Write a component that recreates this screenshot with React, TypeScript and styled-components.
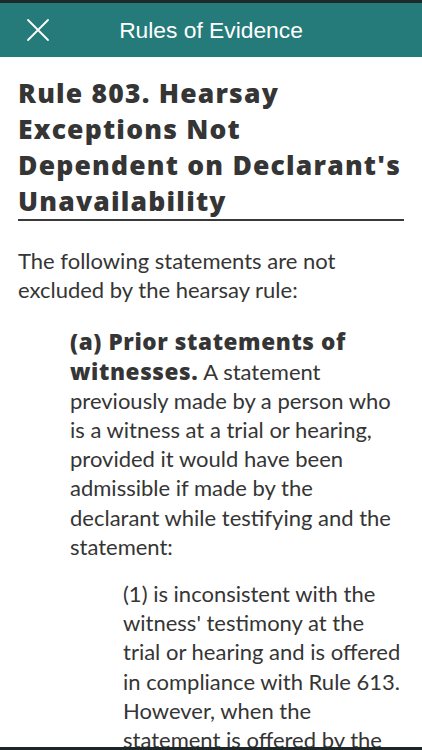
import React from 'react';
import styled, { createGlobalStyle } from 'styled-components';

const TEAL = '#247b7a';
const INK = '#353535';
const BODY_FONT = `'Lato', 'Open Sans', sans-serif`;
const BOLD_FONT = `'Open Sans', 'Lato', sans-serif`;

const GlobalStyle = createGlobalStyle`
  html, body {
    margin: 0;
    padding: 0;
    background: #ffffff;
  }
`;

const Screen = styled.div`
  width: 422px;
  height: 750px;
  display: flex;
  flex-direction: column;
  overflow: hidden;
  background: #ffffff;
  box-sizing: border-box;
  border-bottom: 3px solid #1d2626;
`;

const StatusStrip = styled.div`
  height: 3px;
  background: #1c2a2a;
  flex-shrink: 0;
`;

const Header = styled.header`
  height: 54px;
  flex-shrink: 0;
  background: ${TEAL};
  display: grid;
  grid-template-columns: 1fr auto 1fr;
  align-items: center;
  padding: 0 26px;
`;

const CloseButton = styled.button`
  width: 24px;
  height: 24px;
  padding: 0;
  border: none;
  background: none;
  display: flex;
  cursor: pointer;
  justify-self: start;
`;

const Title = styled.h1`
  margin: 0;
  font-family: 'Liberation Sans', Arial, sans-serif;
  font-weight: 400;
  font-size: 22.8px;
  color: #ffffff;
`;

const Content = styled.main`
  flex: 1;
  padding: 0 18px;
  font-family: ${BODY_FONT};
  color: ${INK};
`;

const RuleTitle = styled.h2`
  margin: 18px 0 0;
  font-family: ${BOLD_FONT};
  font-size: 26.5px;
  font-weight: 800;
  letter-spacing: 1.2px;
  line-height: 36px;
  padding-bottom: 0;
  border-bottom: 2px solid #3a3a3a;
`;

const Paragraph = styled.p<{ $indent?: number; $gap: number }>`
  margin: ${(p) => p.$gap}px 0 0 ${(p) => p.$indent || 0}px;
  font-size: 22px;
  line-height: 29.2px;
`;

const Lead = styled.strong`
  font-family: ${BOLD_FONT};
  font-weight: 800;
  font-size: 22.5px;
  letter-spacing: 0.6px;
`;

const CloseIcon = () => (
  <svg width="24" height="24" viewBox="0 0 24 24">
    <path d="M2 2 L22 22 M22 2 L2 22" stroke="#ffffff" strokeWidth="1.8" strokeLinecap="round" />
  </svg>
);

export default function App() {
  return (
    <>
      <GlobalStyle />
      <Screen>
        <StatusStrip />
        <Header>
          <CloseButton aria-label="Close">
            <CloseIcon />
          </CloseButton>
          <Title>Rules of Evidence</Title>
          <span />
        </Header>
        <Content>
          <RuleTitle>
            Rule 803. Hearsay
            <br />
            Exceptions Not
            <br />
            Dependent on Declarant's
            <br />
            Unavailability
          </RuleTitle>
          <Paragraph $gap={25}>
            The following statements are not
            <br />
            excluded by the hearsay rule:
          </Paragraph>
          <Paragraph $gap={23} $indent={52}>
            <Lead>(a) Prior statements of</Lead>
            <br />
            <Lead>witnesses.</Lead> A statement
            <br />
            previously made by a person who
            <br />
            is a witness at a trial or hearing,
            <br />
            provided it would have been
            <br />
            admissible if made by the
            <br />
            declarant while testifying and the
            <br />
            statement:
          </Paragraph>
          <Paragraph $gap={18} $indent={105}>
            (1) is inconsistent with the
            <br />
            witness' testimony at the
            <br />
            trial or hearing and is offered
            <br />
            in compliance with Rule 613.
            <br />
            However, when the
            <br />
            statement is offered by the
          </Paragraph>
        </Content>
      </Screen>
    </>
  );
}
